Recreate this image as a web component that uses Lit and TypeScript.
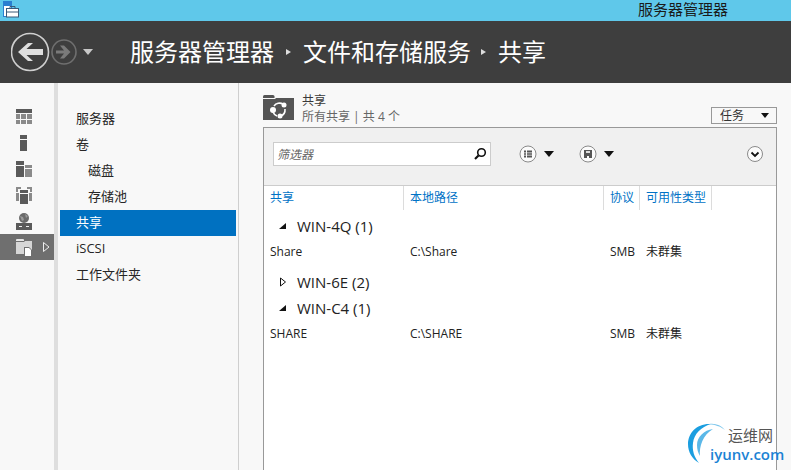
import { LitElement, html, css, svg } from "lit";
import { customElement } from "lit/decorators.js";

const railIcons = [
  svg`<rect x="0" y="0" width="16" height="4" fill="#5a5a5a"/><path d="M0 5h4v5H0zM0 11h4v4H0zM5 5h5v5H5zM5 11h5v4H5zM11 5h5v5h-5zM11 11h5v4h-5z" fill="#8a8a8a"/>`,
  svg`<rect x="4" y="0" width="7" height="4" fill="#5a5a5a"/><rect x="4" y="5" width="7" height="11" fill="#5a5a5a"/>`,
  svg`<rect x="0" y="0" width="8" height="4" fill="#5a5a5a"/><rect x="0" y="5" width="8" height="11" fill="#5a5a5a"/><rect x="9" y="4" width="7" height="3" fill="#8a8a8a"/><rect x="9" y="8" width="7" height="8" fill="#8a8a8a"/>`,
  svg`<path d="M0 0h5v2H2v3H0zM11 0h5v5h-2V2h-3zM0 6h3v8H0zM13 6h3v8h-3z" fill="#8a8a8a"/><rect x="4" y="3" width="8" height="3" fill="#5a5a5a"/><rect x="4" y="7" width="8" height="10" fill="#5a5a5a"/>`,
  svg`<circle cx="8" cy="5" r="5" fill="#6a6a6a"/><path d="M4 3l3 1 1 3-2 1zM9 1l3 2-2 2z" fill="#9a9a9a"/><rect x="0" y="10" width="16" height="7" fill="#5a5a5a"/><path d="M3 13h3v1H3zM10 13h3v1h-3z" fill="#f0f0f0"/>`,
  svg`<path d="M0 0.500Q0 0 1 0H7Q8 0 8 1V2H0z" fill="#e6e6e6"/><path d="M0 3H8L9 2H16V15H0z" fill="#d6d6d6"/><path d="M8 8H13L16 11V17H8z" fill="#6f6f6f"/><path d="M9 9H13L15 11V17H9z" fill="#fff"/>`,
];

@customElement("app-root")
export class AppRoot extends LitElement {
  static styles = css`
    :host {
      display: block;
      position: relative;
      width: 791px;
      height: 470px;
      overflow: hidden;
      background: #f8f8f8;
      font-family: "Open Sans", "Noto Sans CJK SC", sans-serif;
      font-size: 12px;
      color: #333;
    }
    svg { display: block; flex: none; }
    .titlebar {
      height: 21px;
      background: #5fc8ea;
      display: flex;
      justify-content: space-between;
      color: #1a1a1a;
      font-size: 15px;
      line-height: 19px;
      padding: 1px 63px 0 3px;
      box-sizing: border-box;
    }
    .titlebar span { margin-top: -1px; }
    .header {
      height: 62px;
      background: #3e3e3e;
      display: flex;
      align-items: center;
      padding-left: 11px;
      color: #fff;
      font-size: 24px;
    }
    .crumbs {
      display: flex;
      align-items: center;
      margin-left: 29px;
      gap: 12px;
      line-height: 36px;
    }
    .crumb-sep {
      width: 0; height: 0;
      border-left: 5px solid #ddd;
      border-top: 3.5px solid transparent;
      border-bottom: 3.5px solid transparent;
    }
    .crumb-sep.tight { margin-left: -2px; }
    .body { display: flex; height: 387px; }
    .rail {
      width: 54px;
      flex: none;
      padding-top: 21px;
    }
    .rail-item {
      height: 26px;
      display: flex;
      align-items: center;
      padding-left: 16px;
      position: relative;
    }
    .rail-item.on { background: #6f6f6f; }
    .rail-arrow {
      position: absolute;
      left: 43px;
      top: 8px;
    }
    .grip { width: 4px; flex: none; background: #dedede; }
    .nav {
      width: 176px;
      flex: none;
      padding: 23px 2px 0;
      border-right: 1px solid #cfcfcf;
      font-size: 13px;
      color: #262626;
    }
    .nav-item {
      height: 26px;
      line-height: 25px;
      padding-left: 16px;
    }
    .nav-item.sub { padding-left: 28px; }
    .nav-item.on { background: #0071c1; color: #fff; }
    .main {
      flex: 1;
      padding: 12px 14px 0 24px;
      min-width: 0;
      display: flex;
      flex-direction: column;
    }
    .sub-head {
      height: 32px;
      display: flex;
      position: relative;
      flex: none;
    }
    .sub-titles { margin-left: 8px; line-height: 16px; margin-top: -2px; }
    .sub-title { color: #3a3a3a; font-size: 12px; }
    .sub-desc { color: #666; font-size: 12px; }
    .tasks {
      position: absolute;
      right: 0;
      top: 12px;
      width: 49px;
      height: 15px;
      border: 1px solid #999;
      display: flex;
      align-items: center;
      justify-content: space-between;
      padding: 0 7px 0 8px;
      line-height: 15px;
    }
    .tri {
      width: 0; height: 0;
      border-top: 6px solid #111;
      border-left: 5.5px solid transparent;
      border-right: 5.5px solid transparent;
      flex: none;
    }
    .tri.small { border-top-width: 5px; border-left-width: 4.5px; border-right-width: 4.5px; }
    .panel {
      flex: 1;
      border: 1px solid #999;
      border-bottom: 0;
      background: #fff;
    }
    .toolbar {
      height: 58px;
      box-sizing: border-box;
      background: #f0f0f0;
      border-bottom: 1px solid #ccc;
      display: flex;
      align-items: center;
      padding: 0 13px 5px 9px;
    }
    .filter {
      width: 210px;
      height: 22px;
      border: 1px solid #ccc;
      background: #fff;
      display: flex;
      align-items: center;
      justify-content: space-between;
      padding: 0 3px;
      margin-right: 28px;
    }
    .placeholder { font-style: italic; color: #666; font-size: 12px; }
    .menu { display: flex; align-items: center; gap: 7px; width: 60px; }
    .spacer { flex: 1; }
    .cols, .row {
      display: grid;
      grid-template-columns: 140px 200px 36px 72px;
    }
    .cols { height: 24px; line-height: 24px; color: #0072c6; }
    .cols div { padding-left: 6px; border-right: 1px solid #dcdcdc; box-sizing: border-box; }
    .group {
      display: flex;
      align-items: center;
      height: 26px;
      font-size: 15px;
      color: #222;
      padding: 0 0 4px 15px;
      box-sizing: border-box;
      gap: 10px;
    }
    .row { height: 22px; line-height: 22px; color: #222; }
    .row div { padding-left: 6px; white-space: nowrap; }
    .tw { width: 8px; height: 10px; display: flex; align-items: center; justify-content: center; }
    .g1 { margin-top: 5px; }
    .g2 { margin-top: 8px; }
    .logo {
      position: absolute;
      left: 687px;
      top: 422px;
      width: 104px;
      height: 48px;
    }
    .logo svg { position: absolute; left: 0; top: 0; }
    .logo-cn {
      position: absolute;
      left: 41px;
      top: 4px;
      font-size: 15px;
      line-height: 18px;
      color: #555;
    }
    .logo-en {
      position: absolute;
      left: 23px;
      top: 25px;
      font-size: 15px;
      line-height: 15px;
      color: #1b83d4;
      font-weight: 600;
      white-space: nowrap;
    }
  `;

  private renderGroup(name: string, open: boolean, cls: string) {
    return html`<div class="group ${cls}">
      <span class="tw">
        <svg width="8" height="10" viewBox="0 0 8 10">
          ${open
            ? svg`<path d="M0 8L7 2v6z" fill="#111"/>`
            : svg`<path d="M1.500 1L6.500 5 1.500 9z" fill="#fff" stroke="#111" stroke-width="1"/>`}
        </svg>
      </span>
      <span>${name}</span>
    </div>`;
  }

  render() {
    const nav: [string, string][] = [
      ["服务器", ""], ["卷", ""], ["磁盘", "sub"], ["存储池", "sub"],
      ["共享", "on"], ["iSCSI", ""], ["工作文件夹", ""],
    ];
    return html`
      <div class="titlebar">
        <svg width="16" height="17" viewBox="0 0 16 17">
          <rect x="0.500" y="0.500" width="8" height="15" fill="#fff" stroke="#2a7fd0"/>
          <rect x="0" y="0" width="9" height="5" fill="#2a7fd0"/>
          <rect x="3.500" y="7.500" width="12" height="8.500" fill="#fff" stroke="#3a5a78"/>
          <path d="M7 7.500V5.500h5v2M3.500 11H15.500" fill="none" stroke="#3a5a78"/>
        </svg>
        <span>服务器管理器</span>
      </div>
      <div class="header">
        <svg width="90" height="40" viewBox="0 0 90 40">
          <circle cx="19" cy="20" r="18.500" fill="none" stroke="#cfcfcf" stroke-width="1.600"/>
          <path d="M32 17H15.500L22 11H17L7 20 17 29H22L15.500 23H32z" fill="#dedede"/>
          <circle cx="53" cy="20" r="12" fill="none" stroke="#6f6f6f" stroke-width="1.600"/>
          <path d="M45 18.500h8l-4-5h4l6.500 6.500-6.500 6.500h-4l4-5h-8z" fill="#7a7a7a"/>
          <path d="M72 17h10l-5 6z" fill="#c8c8c8"/>
        </svg>
        <div class="crumbs">
          <span>服务器管理器</span><i class="crumb-sep"></i>
          <span>文件和存储服务</span><i class="crumb-sep tight"></i>
          <span>共享</span>
        </div>
      </div>
      <div class="body">
        <div class="rail">
          ${railIcons.map((ic, i) => html`
            <div class="rail-item ${i === 5 ? "on" : ""}">
              <svg width="16" height="17" viewBox="0 0 16 17">${ic}</svg>
              ${i === 5 ? html`<svg class="rail-arrow" width="7" height="10" viewBox="0 0 7 10"><path d="M0.500 0.500L6 5 0.500 9.500z" fill="none" stroke="#eee"/></svg>` : ""}
            </div>`)}
        </div>
        <div class="grip"></div>
        <div class="nav">
          ${nav.map(([t, c]) => html`<div class="nav-item ${c}">${t}</div>`)}
        </div>
        <div class="main">
          <div class="sub-head">
            <svg width="31" height="25" viewBox="0 0 31 25">
              <path d="M0 1.500Q0 0 1.500 0H10q1.500 0 1.500 1.500V3H0z" fill="#555"/>
              <path d="M0 4h12l1-1h18v22H0z" fill="#555"/>
              <path d="M11 11a7 7 0 0 1 9-2M22 14a7 7 0 0 1-4 7M10 17a7 7 0 0 0 4 4" fill="none" stroke="#fff" stroke-width="1.600"/>
              <circle cx="10" cy="15" r="3" fill="#fff"/><circle cx="21" cy="10" r="2.500" fill="#fff"/><circle cx="17" cy="21" r="2.500" fill="#fff"/>
            </svg>
            <div class="sub-titles">
              <div class="sub-title">共享</div>
              <div class="sub-desc">所有共享 | 共 4 个</div>
            </div>
            <div class="tasks"><span>任务</span><i class="tri small"></i></div>
          </div>
          <div class="panel">
            <div class="toolbar">
              <div class="filter">
                <span class="placeholder">筛选器</span>
                <svg width="14" height="14" viewBox="0 0 14 14">
                  <circle cx="8.500" cy="5.500" r="3.800" fill="none" stroke="#111" stroke-width="1.600"/>
                  <path d="M5.500 8.500L2 12" stroke="#111" stroke-width="2.200"/>
                </svg>
              </div>
              <div class="menu">
                <svg width="18" height="18" viewBox="0 0 18 18">
                  <circle cx="9" cy="9" r="8" fill="#fbfbfb" stroke="#8a8a8a"/>
                  <path d="M5 5.500h2v2H5zM5 8.250h2v1.500H5zM5 10.500h2v2H5zM8 5.500h5v2H8zM8 8.250h5v1.500H8zM8 10.500h5v2H8z" fill="#555"/>
                </svg>
                <i class="tri"></i>
              </div>
              <div class="menu">
                <svg width="18" height="18" viewBox="0 0 18 18">
                  <circle cx="9" cy="9" r="8" fill="#fbfbfb" stroke="#8a8a8a"/>
                  <path d="M5 5h8v8H10V11H8v2H5z" fill="#555"/><rect x="7" y="6" width="4" height="2" fill="#ddd"/>
                </svg>
                <i class="tri"></i>
              </div>
              <div class="spacer"></div>
              <svg width="16" height="16" viewBox="0 0 16 16">
                <circle cx="8" cy="8" r="7.500" fill="#fbfbfb" stroke="#8a8a8a"/>
                <path d="M4.500 6.500L8 10l3.500-3.500" fill="none" stroke="#111" stroke-width="1.800"/>
              </svg>
            </div>
            <div class="cols">
              <div>共享</div><div>本地路径</div><div>协议</div><div>可用性类型</div>
            </div>
            ${this.renderGroup("WIN-4Q (1)", true, "g1")}
            <div class="row"><div>Share</div><div>C:\\Share</div><div>SMB</div><div>未群集</div></div>
            ${this.renderGroup("WIN-6E (2)", false, "g2")}
            ${this.renderGroup("WIN-C4 (1)", true, "")}
            <div class="row"><div>SHARE</div><div>C:\\SHARE</div><div>SMB</div><div>未群集</div></div>
          </div>
        </div>
      </div>
      <div class="logo">
        <svg width="42" height="44" viewBox="0 0 42 44">
          <path d="M24 2C10 1 1 11 1 22 1 30 5 37 12 41 7 35 5 28 6 21 7 12 14 5 24 2z" fill="#1b9ee0"/>
          <path d="M26 7C17 8 10 15 10 23 10 27 11 31 13 34 12 24 16 13 26 7z" fill="#5bb8e8"/>
          <path d="M22 2c6-1 12 1 16 6-5-4-10-5-16-6z" fill="#7cc6ec"/>
        </svg>
        <span class="logo-cn">运维网</span>
        <span class="logo-en">iyunv.com</span>
      </div>
    `;
  }
}
